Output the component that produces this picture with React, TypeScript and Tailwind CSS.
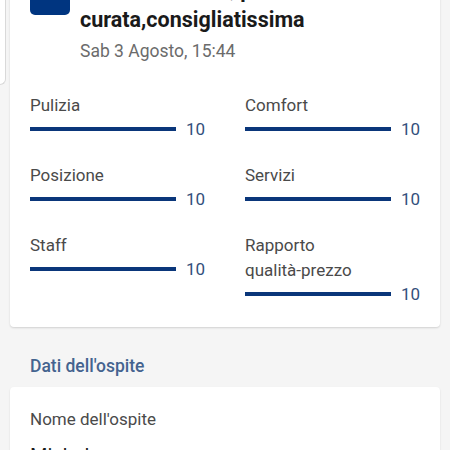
import React from "react";

const ratings = [
  { label: "Pulizia", score: 10 },
  { label: "Comfort", score: 10 },
  { label: "Posizione", score: 10 },
  { label: "Servizi", score: 10 },
  { label: "Staff", score: 10 },
  { label: "Rapporto\nqualità-prezzo", score: 10 },
];

function RatingBar({ label, score }: { label: string; score: number }) {
  return (
    <div className="flex flex-col">
      <span className="text-[17px] leading-[25px] text-[#4a4a4a] whitespace-pre-line">{label}</span>
      <div className="flex items-center gap-[10px] h-[22px]">
        <div className="flex-1 h-1 bg-[#e6e6e6]">
          <div className="h-full bg-[#0a367a]" style={{ width: `${score * 10}%` }} />
        </div>
        <span className="text-[17px] leading-6 text-[#33507c] w-[19px]">{score}</span>
      </div>
    </div>
  );
}

export default function App() {
  return (
    <div className="h-[450px] overflow-hidden bg-[#f5f5f5] font-['Roboto','Liberation_Sans',sans-serif]">
      <div className="-mt-[40px]">
        <div className="flex items-start">
          {/* previous review card peeking in */}
          <div className="w-[6px] h-[125px] shrink-0 bg-white border-r border-b border-[#d9d9d9] rounded-br-[6px]" />
          <div className="ml-[4px] w-[430px] shrink-0 bg-white rounded-b-[4px] shadow-[0_1px_2px_rgba(0,0,0,0.15)] px-5 pt-[15px] pb-[22px]">
            <div className="flex gap-[10px]">
              <div className="w-10 h-10 shrink-0 bg-[#003580] rounded-[5px] rounded-tl-none flex items-end justify-center pb-[12px]">
                <span className="text-white text-[15px] leading-none font-medium">10.0</span>
              </div>
              <div className="flex flex-col">
                <div className="text-[21.5px] leading-[30px] font-bold text-[#1a1a1a]">
                  Struttura nuova, pulita e
                  <br />
                  curata,consigliatissima
                </div>
                <div className="mt-1 text-[17.5px] leading-6 text-[#6b6b6b]">Sab 3 Agosto, 15:44</div>
              </div>
            </div>
            <div className="mt-[30px] grid grid-cols-2 gap-x-10 gap-y-[23px]">
              {ratings.map((r) => (
                <RatingBar key={r.label} label={r.label} score={r.score} />
              ))}
            </div>
          </div>
        </div>

        <div className="mt-[27px] mb-[9px] px-[30px] text-[17.5px] leading-6 font-medium text-[#44638f]">
          Dati dell'ospite
        </div>

        <div className="mx-[10px] bg-white rounded-[4px] shadow-[0_1px_2px_rgba(0,0,0,0.12)] px-5 pt-5 pb-6">
          <div className="text-[17px] leading-6 text-[#4a4a4a]">Nome dell'ospite</div>
          <div className="mt-[12px] text-[20px] leading-[26px] text-[#1a1a1a]">Michele</div>
        </div>
      </div>
    </div>
  );
}
